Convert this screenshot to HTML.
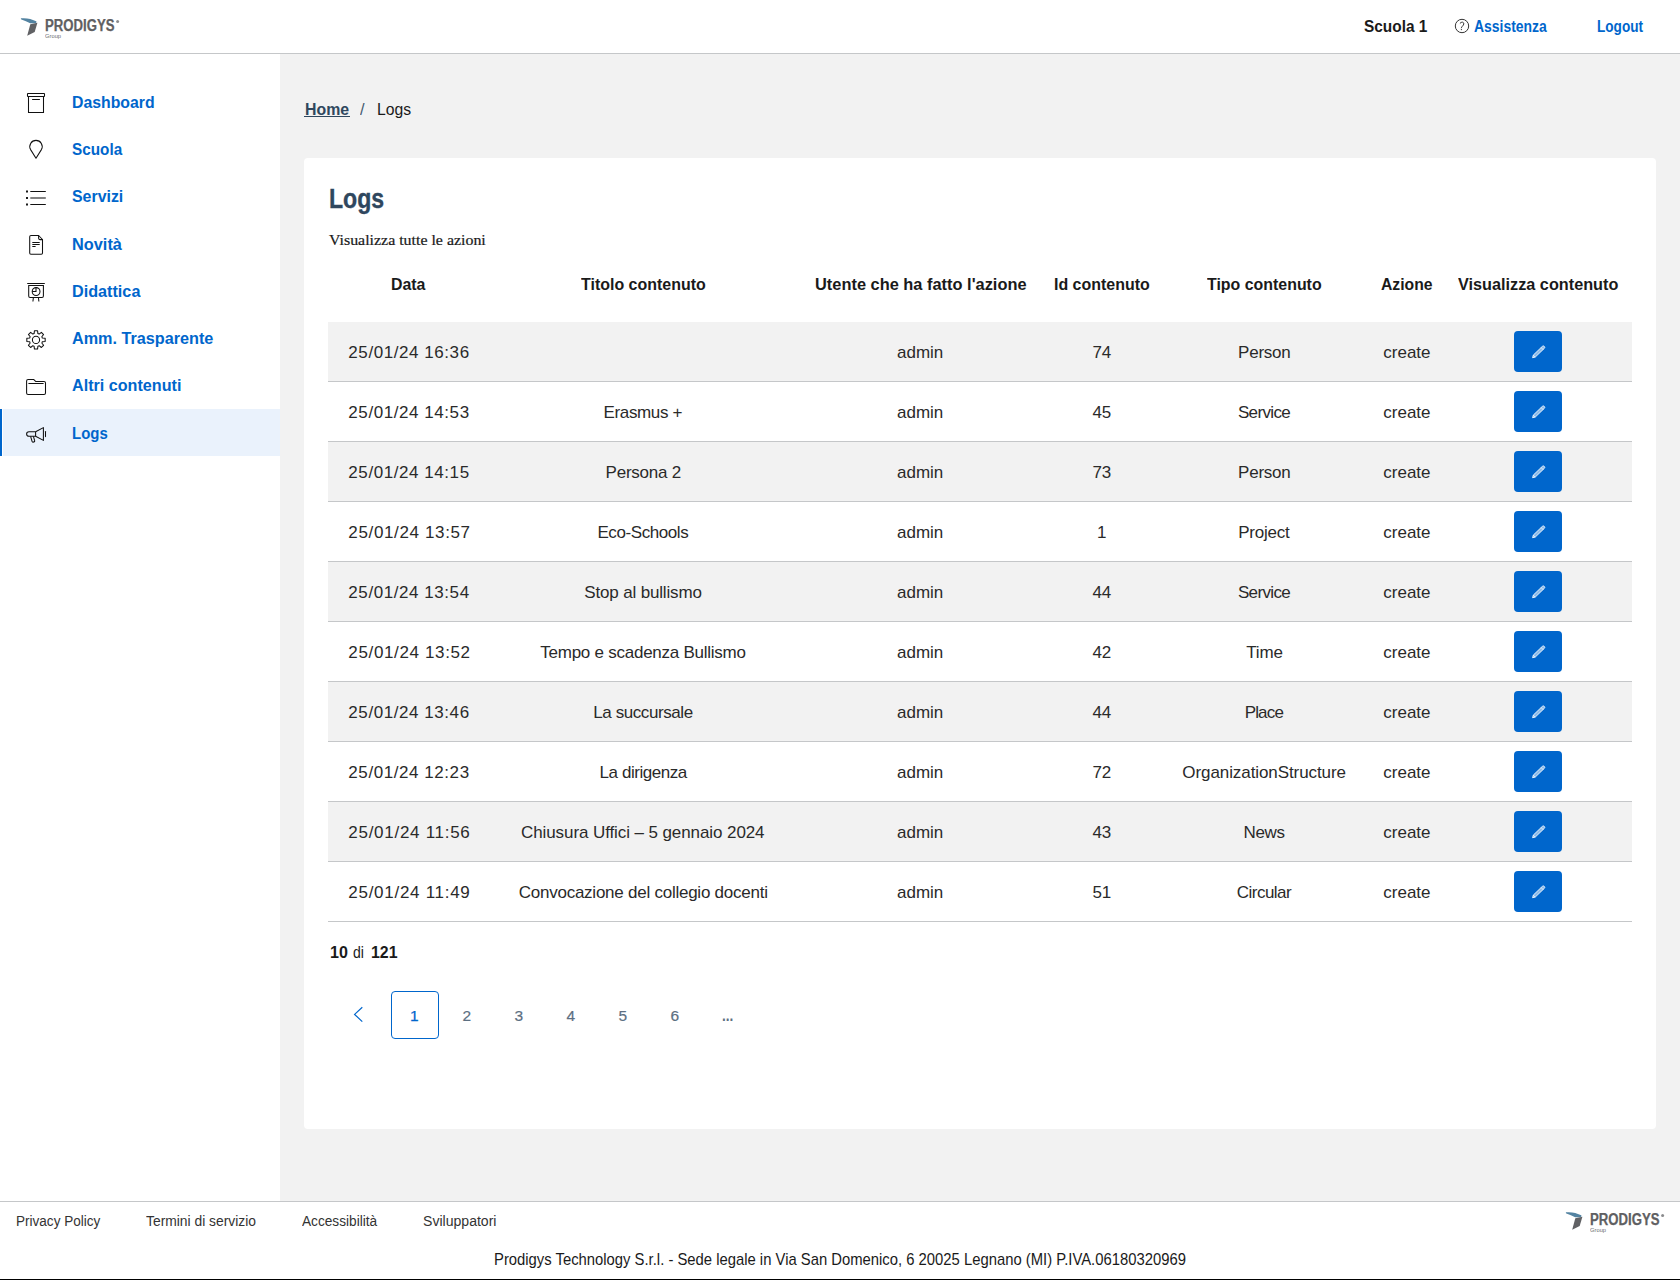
<!DOCTYPE html>
<html><head><meta charset="utf-8"><title>Logs</title>
<style>
html,body{margin:0;padding:0;width:1680px;height:1280px;overflow:hidden;background:#fff}
body{position:relative;font-family:"Liberation Sans",sans-serif}
.t{position:absolute;white-space:pre;transform-origin:0 0}
</style></head><body>
<div style="position:absolute;left:0;top:0;width:1680px;height:53px;background:#fff"></div>
<div style="position:absolute;left:0;top:53px;width:1680px;height:1px;background:#c5c7c9"></div>
<div style="position:absolute;left:0;top:54px;width:280px;height:1147px;background:#fff"></div>
<div style="position:absolute;left:280px;top:54px;width:1400px;height:1147px;background:#f2f2f2"></div>
<div style="position:absolute;left:0;top:409px;width:2px;height:47px;background:#0066cc"></div>
<div style="position:absolute;left:3px;top:409px;width:277px;height:47px;background:#eaf2fc"></div>
<div style="position:absolute;left:304px;top:158px;width:1352px;height:971px;background:#fff;border-radius:4px"></div>
<div style="position:absolute;left:0;top:1201px;width:1680px;height:1px;background:#c5c7c9"></div>
<div style="position:absolute;left:0;top:1202px;width:1680px;height:77px;background:#fff"></div>
<div style="position:absolute;left:0;top:1279px;width:1680px;height:1px;background:#000"></div>
<div class="t" style="left:1364.30px;top:17px;font-size:16.70px;line-height:19px;font-weight:700;color:#1a1a1a;transform:scaleX(0.9232);">Scuola 1</div>
<div class="t" style="left:1473.90px;top:18px;font-size:16.00px;line-height:17px;font-weight:700;color:#0066cc;transform:scaleX(0.8706);">Assistenza</div>
<div class="t" style="left:1597.30px;top:18px;font-size:16.00px;line-height:17px;font-weight:700;color:#0066cc;transform:scaleX(0.8491);">Logout</div>
<div class="t" style="left:44.80px;top:17px;font-size:15.60px;line-height:17px;font-weight:700;color:#5f6062;transform:scaleX(0.8446);-webkit-text-stroke:0.25px #5f6062;">PRODIGYS</div>
<div class="t" style="left:44.80px;top:33px;font-size:6.00px;line-height:6px;font-weight:400;color:#6d6e71;transform:scaleX(0.9647);">Group</div>
<div class="t" style="left:1589.80px;top:1211px;font-size:15.60px;line-height:17px;font-weight:700;color:#5f6062;transform:scaleX(0.8446);-webkit-text-stroke:0.25px #5f6062;">PRODIGYS</div>
<div class="t" style="left:1589.80px;top:1227px;font-size:6.00px;line-height:6px;font-weight:400;color:#6d6e71;transform:scaleX(0.9647);">Group</div>
<div class="t" style="left:71.90px;top:92px;font-size:17.40px;line-height:20px;font-weight:700;color:#0066cc;transform:scaleX(0.9088);">Dashboard</div>
<div class="t" style="left:71.90px;top:139px;font-size:17.40px;line-height:20px;font-weight:700;color:#0066cc;transform:scaleX(0.8793);">Scuola</div>
<div class="t" style="left:71.90px;top:186px;font-size:17.40px;line-height:20px;font-weight:700;color:#0066cc;transform:scaleX(0.9143);">Servizi</div>
<div class="t" style="left:71.90px;top:234px;font-size:17.40px;line-height:20px;font-weight:700;color:#0066cc;transform:scaleX(0.9389);">Novità</div>
<div class="t" style="left:71.90px;top:281px;font-size:17.40px;line-height:20px;font-weight:700;color:#0066cc;transform:scaleX(0.9311);">Didattica</div>
<div class="t" style="left:71.90px;top:328px;font-size:17.40px;line-height:20px;font-weight:700;color:#0066cc;transform:scaleX(0.9316);">Amm. Trasparente</div>
<div class="t" style="left:71.90px;top:375px;font-size:17.40px;line-height:20px;font-weight:700;color:#0066cc;transform:scaleX(0.9280);">Altri contenuti</div>
<div class="t" style="left:71.90px;top:423px;font-size:17.40px;line-height:20px;font-weight:700;color:#0066cc;transform:scaleX(0.8595);">Logs</div>
<div class="t" style="left:304.80px;top:99px;font-size:17.40px;line-height:20px;font-weight:700;color:#2f475e;transform:scaleX(0.9122);">Home</div>
<div style="position:absolute;left:304px;top:116px;width:46px;height:1px;background:#2f475e"></div>
<div class="t" style="left:360.14px;top:99px;font-size:17.40px;line-height:20px;font-weight:400;color:#455b71;transform:scaleX(0.9429);">/</div>
<div class="t" style="left:376.60px;top:99px;font-size:17.40px;line-height:20px;font-weight:400;color:#1a1a1a;transform:scaleX(0.9053);">Logs</div>
<div class="t" style="left:328.75px;top:183px;font-size:27.30px;line-height:31px;font-weight:700;color:#2f475e;transform:scaleX(0.8469);-webkit-text-stroke:0.35px #2f475e;">Logs</div>
<div class="t" style="left:328.60px;top:232px;font-size:14.20px;line-height:16px;font-weight:400;color:#1a1a1a;font-family:'Liberation Serif', serif;transform:scaleX(1.1214);-webkit-text-stroke:0.2px #1a1a1a;">Visualizza tutte le azioni</div>
<div class="t" style="left:391.05px;top:275px;font-size:17.00px;line-height:19px;font-weight:700;color:#1a1a1a;transform:scaleX(0.9342);">Data</div>
<div class="t" style="left:581.29px;top:275px;font-size:17.00px;line-height:19px;font-weight:700;color:#1a1a1a;transform:scaleX(0.9396);">Titolo contenuto</div>
<div class="t" style="left:814.55px;top:275px;font-size:17.00px;line-height:19px;font-weight:700;color:#1a1a1a;transform:scaleX(0.9641);">Utente che ha fatto l'azione</div>
<div class="t" style="left:1053.90px;top:275px;font-size:17.00px;line-height:19px;font-weight:700;color:#1a1a1a;transform:scaleX(0.9392);">Id contenuto</div>
<div class="t" style="left:1207.09px;top:275px;font-size:17.00px;line-height:19px;font-weight:700;color:#1a1a1a;transform:scaleX(0.9363);">Tipo contenuto</div>
<div class="t" style="left:1381.20px;top:275px;font-size:17.00px;line-height:19px;font-weight:700;color:#1a1a1a;transform:scaleX(0.9250);">Azione</div>
<div class="t" style="left:1457.75px;top:275px;font-size:17.00px;line-height:19px;font-weight:700;color:#1a1a1a;transform:scaleX(0.9554);">Visualizza contenuto</div>
<div style="position:absolute;left:328px;top:322px;width:1304px;height:59px;background:#f2f2f2"></div>
<div style="position:absolute;left:328px;top:381px;width:1304px;height:1px;background:#c5c7c9"></div>
<div class="t" style="left:348.35px;top:343px;font-size:17.00px;line-height:19px;font-weight:400;color:#2a2a2a;letter-spacing:0.562px;">25/01/24 16:36</div>
<div class="t" style="left:897.00px;top:343px;font-size:17.00px;line-height:19px;font-weight:400;color:#2a2a2a;">admin</div>
<div class="t" style="left:1092.40px;top:343px;font-size:17.00px;line-height:19px;font-weight:400;color:#2a2a2a;">74</div>
<div class="t" style="left:1238.10px;top:343px;font-size:17.00px;line-height:19px;font-weight:400;color:#2a2a2a;letter-spacing:-0.240px;">Person</div>
<div class="t" style="left:1383.30px;top:343px;font-size:17.00px;line-height:19px;font-weight:400;color:#2a2a2a;">create</div>
<div style="position:absolute;left:1514px;top:331px;width:48px;height:41px;background:#0066cc;border-radius:4px"></div>
<svg style="position:absolute;left:1530px;top:344px" width="16" height="16" viewBox="0 0 16 16"><path d="M2.6 13.7 L5.23 13.12 L14.27 4.41 A1.4 1.4 0 0 0 12.33 2.39 L3.29 11.1 Z" fill="rgba(255,255,255,0.55)" stroke="#fff" stroke-width="0.85" stroke-linejoin="round"/><path d="M3.29 11.1 L5.23 13.12 M11.11 3.56 L13.05 5.58" stroke="#fff" stroke-width="0.7"/></svg>
<div style="position:absolute;left:328px;top:382px;width:1304px;height:59px;background:#ffffff"></div>
<div style="position:absolute;left:328px;top:441px;width:1304px;height:1px;background:#c5c7c9"></div>
<div class="t" style="left:348.35px;top:403px;font-size:17.00px;line-height:19px;font-weight:400;color:#2a2a2a;letter-spacing:0.562px;">25/01/24 14:53</div>
<div class="t" style="left:603.50px;top:403px;font-size:17.00px;line-height:19px;font-weight:400;color:#2a2a2a;letter-spacing:-0.350px;">Erasmus +</div>
<div class="t" style="left:897.00px;top:403px;font-size:17.00px;line-height:19px;font-weight:400;color:#2a2a2a;">admin</div>
<div class="t" style="left:1092.40px;top:403px;font-size:17.00px;line-height:19px;font-weight:400;color:#2a2a2a;">45</div>
<div class="t" style="left:1237.90px;top:403px;font-size:17.00px;line-height:19px;font-weight:400;color:#2a2a2a;letter-spacing:-0.633px;">Service</div>
<div class="t" style="left:1383.30px;top:403px;font-size:17.00px;line-height:19px;font-weight:400;color:#2a2a2a;">create</div>
<div style="position:absolute;left:1514px;top:391px;width:48px;height:41px;background:#0066cc;border-radius:4px"></div>
<svg style="position:absolute;left:1530px;top:404px" width="16" height="16" viewBox="0 0 16 16"><path d="M2.6 13.7 L5.23 13.12 L14.27 4.41 A1.4 1.4 0 0 0 12.33 2.39 L3.29 11.1 Z" fill="rgba(255,255,255,0.55)" stroke="#fff" stroke-width="0.85" stroke-linejoin="round"/><path d="M3.29 11.1 L5.23 13.12 M11.11 3.56 L13.05 5.58" stroke="#fff" stroke-width="0.7"/></svg>
<div style="position:absolute;left:328px;top:442px;width:1304px;height:59px;background:#f2f2f2"></div>
<div style="position:absolute;left:328px;top:501px;width:1304px;height:1px;background:#c5c7c9"></div>
<div class="t" style="left:348.35px;top:463px;font-size:17.00px;line-height:19px;font-weight:400;color:#2a2a2a;letter-spacing:0.562px;">25/01/24 14:15</div>
<div class="t" style="left:605.60px;top:463px;font-size:17.00px;line-height:19px;font-weight:400;color:#2a2a2a;letter-spacing:-0.250px;">Persona 2</div>
<div class="t" style="left:897.00px;top:463px;font-size:17.00px;line-height:19px;font-weight:400;color:#2a2a2a;">admin</div>
<div class="t" style="left:1092.40px;top:463px;font-size:17.00px;line-height:19px;font-weight:400;color:#2a2a2a;">73</div>
<div class="t" style="left:1238.10px;top:463px;font-size:17.00px;line-height:19px;font-weight:400;color:#2a2a2a;letter-spacing:-0.240px;">Person</div>
<div class="t" style="left:1383.30px;top:463px;font-size:17.00px;line-height:19px;font-weight:400;color:#2a2a2a;">create</div>
<div style="position:absolute;left:1514px;top:451px;width:48px;height:41px;background:#0066cc;border-radius:4px"></div>
<svg style="position:absolute;left:1530px;top:464px" width="16" height="16" viewBox="0 0 16 16"><path d="M2.6 13.7 L5.23 13.12 L14.27 4.41 A1.4 1.4 0 0 0 12.33 2.39 L3.29 11.1 Z" fill="rgba(255,255,255,0.55)" stroke="#fff" stroke-width="0.85" stroke-linejoin="round"/><path d="M3.29 11.1 L5.23 13.12 M11.11 3.56 L13.05 5.58" stroke="#fff" stroke-width="0.7"/></svg>
<div style="position:absolute;left:328px;top:502px;width:1304px;height:59px;background:#ffffff"></div>
<div style="position:absolute;left:328px;top:561px;width:1304px;height:1px;background:#c5c7c9"></div>
<div class="t" style="left:348.35px;top:523px;font-size:17.00px;line-height:19px;font-weight:400;color:#2a2a2a;letter-spacing:0.638px;">25/01/24 13:57</div>
<div class="t" style="left:597.40px;top:523px;font-size:17.00px;line-height:19px;font-weight:400;color:#2a2a2a;letter-spacing:-0.410px;">Eco-Schools</div>
<div class="t" style="left:897.00px;top:523px;font-size:17.00px;line-height:19px;font-weight:400;color:#2a2a2a;">admin</div>
<div class="t" style="left:1096.90px;top:523px;font-size:17.00px;line-height:19px;font-weight:400;color:#2a2a2a;">1</div>
<div class="t" style="left:1238.20px;top:523px;font-size:17.00px;line-height:19px;font-weight:400;color:#2a2a2a;letter-spacing:-0.233px;">Project</div>
<div class="t" style="left:1383.30px;top:523px;font-size:17.00px;line-height:19px;font-weight:400;color:#2a2a2a;">create</div>
<div style="position:absolute;left:1514px;top:511px;width:48px;height:41px;background:#0066cc;border-radius:4px"></div>
<svg style="position:absolute;left:1530px;top:524px" width="16" height="16" viewBox="0 0 16 16"><path d="M2.6 13.7 L5.23 13.12 L14.27 4.41 A1.4 1.4 0 0 0 12.33 2.39 L3.29 11.1 Z" fill="rgba(255,255,255,0.55)" stroke="#fff" stroke-width="0.85" stroke-linejoin="round"/><path d="M3.29 11.1 L5.23 13.12 M11.11 3.56 L13.05 5.58" stroke="#fff" stroke-width="0.7"/></svg>
<div style="position:absolute;left:328px;top:562px;width:1304px;height:59px;background:#f2f2f2"></div>
<div style="position:absolute;left:328px;top:621px;width:1304px;height:1px;background:#c5c7c9"></div>
<div class="t" style="left:348.35px;top:583px;font-size:17.00px;line-height:19px;font-weight:400;color:#2a2a2a;letter-spacing:0.562px;">25/01/24 13:54</div>
<div class="t" style="left:584.30px;top:583px;font-size:17.00px;line-height:19px;font-weight:400;color:#2a2a2a;letter-spacing:-0.160px;">Stop al bullismo</div>
<div class="t" style="left:897.00px;top:583px;font-size:17.00px;line-height:19px;font-weight:400;color:#2a2a2a;">admin</div>
<div class="t" style="left:1092.40px;top:583px;font-size:17.00px;line-height:19px;font-weight:400;color:#2a2a2a;">44</div>
<div class="t" style="left:1237.90px;top:583px;font-size:17.00px;line-height:19px;font-weight:400;color:#2a2a2a;letter-spacing:-0.633px;">Service</div>
<div class="t" style="left:1383.30px;top:583px;font-size:17.00px;line-height:19px;font-weight:400;color:#2a2a2a;">create</div>
<div style="position:absolute;left:1514px;top:571px;width:48px;height:41px;background:#0066cc;border-radius:4px"></div>
<svg style="position:absolute;left:1530px;top:584px" width="16" height="16" viewBox="0 0 16 16"><path d="M2.6 13.7 L5.23 13.12 L14.27 4.41 A1.4 1.4 0 0 0 12.33 2.39 L3.29 11.1 Z" fill="rgba(255,255,255,0.55)" stroke="#fff" stroke-width="0.85" stroke-linejoin="round"/><path d="M3.29 11.1 L5.23 13.12 M11.11 3.56 L13.05 5.58" stroke="#fff" stroke-width="0.7"/></svg>
<div style="position:absolute;left:328px;top:622px;width:1304px;height:59px;background:#ffffff"></div>
<div style="position:absolute;left:328px;top:681px;width:1304px;height:1px;background:#c5c7c9"></div>
<div class="t" style="left:348.35px;top:643px;font-size:17.00px;line-height:19px;font-weight:400;color:#2a2a2a;letter-spacing:0.638px;">25/01/24 13:52</div>
<div class="t" style="left:540.30px;top:643px;font-size:17.00px;line-height:19px;font-weight:400;color:#2a2a2a;letter-spacing:-0.250px;">Tempo e scadenza Bullismo</div>
<div class="t" style="left:897.00px;top:643px;font-size:17.00px;line-height:19px;font-weight:400;color:#2a2a2a;">admin</div>
<div class="t" style="left:1092.40px;top:643px;font-size:17.00px;line-height:19px;font-weight:400;color:#2a2a2a;">42</div>
<div class="t" style="left:1246.15px;top:643px;font-size:17.00px;line-height:19px;font-weight:400;color:#2a2a2a;letter-spacing:-0.100px;">Time</div>
<div class="t" style="left:1383.30px;top:643px;font-size:17.00px;line-height:19px;font-weight:400;color:#2a2a2a;">create</div>
<div style="position:absolute;left:1514px;top:631px;width:48px;height:41px;background:#0066cc;border-radius:4px"></div>
<svg style="position:absolute;left:1530px;top:644px" width="16" height="16" viewBox="0 0 16 16"><path d="M2.6 13.7 L5.23 13.12 L14.27 4.41 A1.4 1.4 0 0 0 12.33 2.39 L3.29 11.1 Z" fill="rgba(255,255,255,0.55)" stroke="#fff" stroke-width="0.85" stroke-linejoin="round"/><path d="M3.29 11.1 L5.23 13.12 M11.11 3.56 L13.05 5.58" stroke="#fff" stroke-width="0.7"/></svg>
<div style="position:absolute;left:328px;top:682px;width:1304px;height:59px;background:#f2f2f2"></div>
<div style="position:absolute;left:328px;top:741px;width:1304px;height:1px;background:#c5c7c9"></div>
<div class="t" style="left:348.35px;top:703px;font-size:17.00px;line-height:19px;font-weight:400;color:#2a2a2a;letter-spacing:0.562px;">25/01/24 13:46</div>
<div class="t" style="left:593.30px;top:703px;font-size:17.00px;line-height:19px;font-weight:400;color:#2a2a2a;letter-spacing:-0.425px;">La succursale</div>
<div class="t" style="left:897.00px;top:703px;font-size:17.00px;line-height:19px;font-weight:400;color:#2a2a2a;">admin</div>
<div class="t" style="left:1092.40px;top:703px;font-size:17.00px;line-height:19px;font-weight:400;color:#2a2a2a;">44</div>
<div class="t" style="left:1244.65px;top:703px;font-size:17.00px;line-height:19px;font-weight:400;color:#2a2a2a;letter-spacing:-0.825px;">Place</div>
<div class="t" style="left:1383.30px;top:703px;font-size:17.00px;line-height:19px;font-weight:400;color:#2a2a2a;">create</div>
<div style="position:absolute;left:1514px;top:691px;width:48px;height:41px;background:#0066cc;border-radius:4px"></div>
<svg style="position:absolute;left:1530px;top:704px" width="16" height="16" viewBox="0 0 16 16"><path d="M2.6 13.7 L5.23 13.12 L14.27 4.41 A1.4 1.4 0 0 0 12.33 2.39 L3.29 11.1 Z" fill="rgba(255,255,255,0.55)" stroke="#fff" stroke-width="0.85" stroke-linejoin="round"/><path d="M3.29 11.1 L5.23 13.12 M11.11 3.56 L13.05 5.58" stroke="#fff" stroke-width="0.7"/></svg>
<div style="position:absolute;left:328px;top:742px;width:1304px;height:59px;background:#ffffff"></div>
<div style="position:absolute;left:328px;top:801px;width:1304px;height:1px;background:#c5c7c9"></div>
<div class="t" style="left:348.35px;top:763px;font-size:17.00px;line-height:19px;font-weight:400;color:#2a2a2a;letter-spacing:0.562px;">25/01/24 12:23</div>
<div class="t" style="left:599.60px;top:763px;font-size:17.00px;line-height:19px;font-weight:400;color:#2a2a2a;letter-spacing:-0.445px;">La dirigenza</div>
<div class="t" style="left:897.00px;top:763px;font-size:17.00px;line-height:19px;font-weight:400;color:#2a2a2a;">admin</div>
<div class="t" style="left:1092.40px;top:763px;font-size:17.00px;line-height:19px;font-weight:400;color:#2a2a2a;">72</div>
<div class="t" style="left:1182.35px;top:763px;font-size:17.00px;line-height:19px;font-weight:400;color:#2a2a2a;letter-spacing:-0.085px;">OrganizationStructure</div>
<div class="t" style="left:1383.30px;top:763px;font-size:17.00px;line-height:19px;font-weight:400;color:#2a2a2a;">create</div>
<div style="position:absolute;left:1514px;top:751px;width:48px;height:41px;background:#0066cc;border-radius:4px"></div>
<svg style="position:absolute;left:1530px;top:764px" width="16" height="16" viewBox="0 0 16 16"><path d="M2.6 13.7 L5.23 13.12 L14.27 4.41 A1.4 1.4 0 0 0 12.33 2.39 L3.29 11.1 Z" fill="rgba(255,255,255,0.55)" stroke="#fff" stroke-width="0.85" stroke-linejoin="round"/><path d="M3.29 11.1 L5.23 13.12 M11.11 3.56 L13.05 5.58" stroke="#fff" stroke-width="0.7"/></svg>
<div style="position:absolute;left:328px;top:802px;width:1304px;height:59px;background:#f2f2f2"></div>
<div style="position:absolute;left:328px;top:861px;width:1304px;height:1px;background:#c5c7c9"></div>
<div class="t" style="left:348.35px;top:823px;font-size:17.00px;line-height:19px;font-weight:400;color:#2a2a2a;letter-spacing:0.715px;">25/01/24 11:56</div>
<div class="t" style="left:521.00px;top:823px;font-size:17.00px;line-height:19px;font-weight:400;color:#2a2a2a;letter-spacing:-0.090px;">Chiusura Uffici – 5 gennaio 2024</div>
<div class="t" style="left:897.00px;top:823px;font-size:17.00px;line-height:19px;font-weight:400;color:#2a2a2a;">admin</div>
<div class="t" style="left:1092.40px;top:823px;font-size:17.00px;line-height:19px;font-weight:400;color:#2a2a2a;">43</div>
<div class="t" style="left:1243.60px;top:823px;font-size:17.00px;line-height:19px;font-weight:400;color:#2a2a2a;letter-spacing:-0.400px;">News</div>
<div class="t" style="left:1383.30px;top:823px;font-size:17.00px;line-height:19px;font-weight:400;color:#2a2a2a;">create</div>
<div style="position:absolute;left:1514px;top:811px;width:48px;height:41px;background:#0066cc;border-radius:4px"></div>
<svg style="position:absolute;left:1530px;top:824px" width="16" height="16" viewBox="0 0 16 16"><path d="M2.6 13.7 L5.23 13.12 L14.27 4.41 A1.4 1.4 0 0 0 12.33 2.39 L3.29 11.1 Z" fill="rgba(255,255,255,0.55)" stroke="#fff" stroke-width="0.85" stroke-linejoin="round"/><path d="M3.29 11.1 L5.23 13.12 M11.11 3.56 L13.05 5.58" stroke="#fff" stroke-width="0.7"/></svg>
<div style="position:absolute;left:328px;top:862px;width:1304px;height:59px;background:#ffffff"></div>
<div style="position:absolute;left:328px;top:921px;width:1304px;height:1px;background:#c5c7c9"></div>
<div class="t" style="left:348.35px;top:883px;font-size:17.00px;line-height:19px;font-weight:400;color:#2a2a2a;letter-spacing:0.715px;">25/01/24 11:49</div>
<div class="t" style="left:518.75px;top:883px;font-size:17.00px;line-height:19px;font-weight:400;color:#2a2a2a;letter-spacing:-0.247px;">Convocazione del collegio docenti</div>
<div class="t" style="left:897.00px;top:883px;font-size:17.00px;line-height:19px;font-weight:400;color:#2a2a2a;">admin</div>
<div class="t" style="left:1092.40px;top:883px;font-size:17.00px;line-height:19px;font-weight:400;color:#2a2a2a;">51</div>
<div class="t" style="left:1236.85px;top:883px;font-size:17.00px;line-height:19px;font-weight:400;color:#2a2a2a;letter-spacing:-0.529px;">Circular</div>
<div class="t" style="left:1383.30px;top:883px;font-size:17.00px;line-height:19px;font-weight:400;color:#2a2a2a;">create</div>
<div style="position:absolute;left:1514px;top:871px;width:48px;height:41px;background:#0066cc;border-radius:4px"></div>
<svg style="position:absolute;left:1530px;top:884px" width="16" height="16" viewBox="0 0 16 16"><path d="M2.6 13.7 L5.23 13.12 L14.27 4.41 A1.4 1.4 0 0 0 12.33 2.39 L3.29 11.1 Z" fill="rgba(255,255,255,0.55)" stroke="#fff" stroke-width="0.85" stroke-linejoin="round"/><path d="M3.29 11.1 L5.23 13.12 M11.11 3.56 L13.05 5.58" stroke="#fff" stroke-width="0.7"/></svg>
<div class="t" style="left:329.50px;top:942px;font-size:17.40px;line-height:20px;font-weight:700;color:#1a1a1a;transform:scaleX(0.9250);">10</div>
<div class="t" style="left:353.00px;top:942px;font-size:17.40px;line-height:20px;font-weight:400;color:#1a1a1a;transform:scaleX(0.8071);">di</div>
<div class="t" style="left:370.90px;top:942px;font-size:17.40px;line-height:20px;font-weight:700;color:#1a1a1a;transform:scaleX(0.9138);">121</div>
<div style="position:absolute;left:391px;top:991px;width:46px;height:46px;border:1px solid #0066cc;border-radius:4px"></div>
<div class="t" style="left:410.00px;top:1007px;font-size:15.50px;line-height:17px;font-weight:400;color:#0066cc;-webkit-text-stroke:0.25px #0066cc;">1</div>
<div class="t" style="left:462.50px;top:1007px;font-size:15.50px;line-height:17px;font-weight:400;color:#5c6f82;-webkit-text-stroke:0.2px #5c6f82;">2</div>
<div class="t" style="left:514.50px;top:1007px;font-size:15.50px;line-height:17px;font-weight:400;color:#5c6f82;-webkit-text-stroke:0.2px #5c6f82;">3</div>
<div class="t" style="left:566.50px;top:1007px;font-size:15.50px;line-height:17px;font-weight:400;color:#5c6f82;-webkit-text-stroke:0.2px #5c6f82;">4</div>
<div class="t" style="left:618.50px;top:1007px;font-size:15.50px;line-height:17px;font-weight:400;color:#5c6f82;-webkit-text-stroke:0.2px #5c6f82;">5</div>
<div class="t" style="left:670.50px;top:1007px;font-size:15.50px;line-height:17px;font-weight:400;color:#5c6f82;-webkit-text-stroke:0.2px #5c6f82;">6</div>
<div class="t" style="left:721.50px;top:1007px;font-size:16.00px;line-height:17px;font-weight:700;color:#5c6f82;transform:scaleX(0.8462);">...</div>
<div class="t" style="left:15.50px;top:1212px;font-size:15.50px;line-height:17px;font-weight:400;color:#333333;transform:scaleX(0.8742);">Privacy Policy</div>
<div class="t" style="left:146.30px;top:1212px;font-size:15.50px;line-height:17px;font-weight:400;color:#333333;transform:scaleX(0.8935);">Termini di servizio</div>
<div class="t" style="left:302.00px;top:1212px;font-size:15.50px;line-height:17px;font-weight:400;color:#333333;transform:scaleX(0.8814);">Accessibilità</div>
<div class="t" style="left:423.20px;top:1212px;font-size:15.50px;line-height:17px;font-weight:400;color:#333333;transform:scaleX(0.9074);">Sviluppatori</div>
<div class="t" style="left:493.90px;top:1250px;font-size:16.40px;line-height:18px;font-weight:400;color:#1a1a1a;transform:scaleX(0.9043);">Prodigys Technology S.r.l. - Sede legale in Via San Domenico, 6 20025 Legnano (MI) P.IVA.06180320969</div>
<svg style="position:absolute;left:0;top:0" width="1680" height="1280" viewBox="0 0 1680 1280"><rect x="27.5" y="93.5" width="17" height="3" rx="0.5" fill="none" stroke="#111" stroke-width="1.05"/><path d="M28.5 96.5 V112.5 H43.5 V96.5" fill="none" stroke="#111" stroke-width="1.05"/><path d="M32.5 99.5 H39.5" fill="none" stroke="#111" stroke-width="1.05" stroke-linecap="round"/><path d="M36 158.2 L30.6 149.6 A6.2 6.2 0 1 1 41.4 149.6 Z" fill="none" stroke="#111" stroke-width="1.05" stroke-linejoin="round"/><rect x="26" y="190.5" width="2" height="2" fill="#1a1a1a"/><path d="M30.3 191.5 H45.8" fill="none" stroke="#111" stroke-width="1.05"/><rect x="26" y="197.0" width="2" height="2" fill="#1a1a1a"/><path d="M30.3 198.0 H45.8" fill="none" stroke="#111" stroke-width="1.05"/><rect x="26" y="203.5" width="2" height="2" fill="#1a1a1a"/><path d="M30.3 204.5 H45.8" fill="none" stroke="#111" stroke-width="1.05"/><path d="M31 235.5 H38.6 L42.5 239.5 V253 Q42.5 254.2 41.3 254.2 H30.9 Q29.7 254.2 29.7 253 V236.8 Q29.7 235.5 31 235.5 Z" fill="none" stroke="#111" stroke-width="1.05" stroke-linejoin="round"/><path d="M38.6 235.5 V238.3 Q38.6 239.6 39.9 239.6 H42.5" fill="none" stroke="#111" stroke-width="1.05"/><path d="M32.3 242.4 H39.7 M32.3 244.5 H39.7 M32.3 246.5 H35.6" fill="none" stroke="#111" stroke-width="1.05"/><path d="M27.2 283.5 H44.8" fill="none" stroke="#111" stroke-width="1.05"/><path d="M28.7 285.5 H43.4 V296 Q43.4 297.4 42 297.4 H30.1 Q28.7 297.4 28.7 296 Z" fill="none" stroke="#111" stroke-width="1.05"/><circle cx="36.1" cy="291.5" r="3.9" fill="none" stroke="#111" stroke-width="1.05"/><path d="M36 287.6 V291.5 H32.2" fill="none" stroke="#111" stroke-width="1.05"/><path d="M33.4 297.5 L32.9 301.5 M38.4 297.5 L38.9 301.5" fill="none" stroke="#111" stroke-width="1.05"/><path d="M33.47 333.80 L34.11 333.58 L34.43 330.73 L37.57 330.73 L37.89 333.58 L38.53 333.80 L39.14 334.09 L41.37 332.31 L43.59 334.53 L41.81 336.76 L42.10 337.37 L42.32 338.01 L45.17 338.33 L45.17 341.47 L42.32 341.79 L42.10 342.43 L41.81 343.04 L43.59 345.27 L41.37 347.49 L39.14 345.71 L38.53 346.00 L37.89 346.22 L37.57 349.07 L34.43 349.07 L34.11 346.22 L33.47 346.00 L32.86 345.71 L30.63 347.49 L28.41 345.27 L30.19 343.04 L29.90 342.43 L29.68 341.79 L26.83 341.47 L26.83 338.33 L29.68 338.01 L29.90 337.37 L30.19 336.76 L28.41 334.53 L30.63 332.31 L32.86 334.09 Z" fill="none" stroke="#111" stroke-width="1.05" stroke-linejoin="round"/><circle cx="36" cy="339.9" r="3.6" fill="none" stroke="#111" stroke-width="1.05"/><path d="M28.1 379.4 H33.6 L35.6 381.4 H44 Q45.5 381.4 45.5 382.9 V392.9 Q45.5 394.4 44 394.4 H28.1 Q26.6 394.4 26.6 392.9 V380.9 Q26.6 379.4 28.1 379.4 Z" fill="none" stroke="#111" stroke-width="1.05" stroke-linejoin="round"/><path d="M28.4 383.5 H43.6" fill="none" stroke="#111" stroke-width="1.05"/><path d="M35.6 431.7 H29 Q26.6 431.7 26.6 434 Q26.6 436.3 29 436.3 H35.6 Z" fill="none" stroke="#111" stroke-width="1.05" stroke-linejoin="round"/><path d="M35.6 431.7 L43.4 427.6 V440.4 L35.6 436.3" fill="none" stroke="#111" stroke-width="1.05" stroke-linejoin="round"/><path d="M45.5 431.6 V436.6" fill="none" stroke="#111" stroke-width="1.05" stroke-width="1.3" stroke-linecap="round"/><path d="M30.6 436.4 L32 441.2 Q32.6 442.4 33.8 442 Q35 441.6 34.6 440.4 L33.4 436.4" fill="none" stroke="#111" stroke-width="1.05" stroke-linejoin="round"/><circle cx="1462" cy="26" r="6.7" fill="none" stroke="#333" stroke-width="1.0"/><path d="M1460.2 23.1 Q1461.2 22 1462.6 22.2 Q1463.9 22.6 1463.8 23.9 Q1463.6 25.2 1462.3 26.3 Q1461.6 27 1461.4 27.8" fill="none" stroke="#333" stroke-width="1.0" stroke-linecap="round"/><circle cx="1461.4" cy="29.6" r="0.65" fill="#333"/><path d="M362.3 1007.2 L354.6 1014.4 L362.3 1021.6" fill="none" stroke="#0066cc" stroke-width="1.2"/><g transform="translate(0 0)"><path d="M21 18.3 Q26 17.8 30.2 19.1 L36.3 21.3 Q37 22.3 35.6 23.2 L30.2 23.3 Q26 21.3 21.4 19.6 Q20.4 18.9 21 18.3 Z" fill="#5383a1"/><path d="M30.3 24.3 L37.4 22.8 L34.7 32.1 L27.2 35.8 Z" fill="#606164"/><circle cx="117.6" cy="21.6" r="1.5" fill="#8a8b8d"/></g><g transform="translate(1545 1194)"><path d="M21 18.3 Q26 17.8 30.2 19.1 L36.3 21.3 Q37 22.3 35.6 23.2 L30.2 23.3 Q26 21.3 21.4 19.6 Q20.4 18.9 21 18.3 Z" fill="#5383a1"/><path d="M30.3 24.3 L37.4 22.8 L34.7 32.1 L27.2 35.8 Z" fill="#606164"/><circle cx="117.6" cy="21.6" r="1.5" fill="#8a8b8d"/></g></svg>
</body></html>
